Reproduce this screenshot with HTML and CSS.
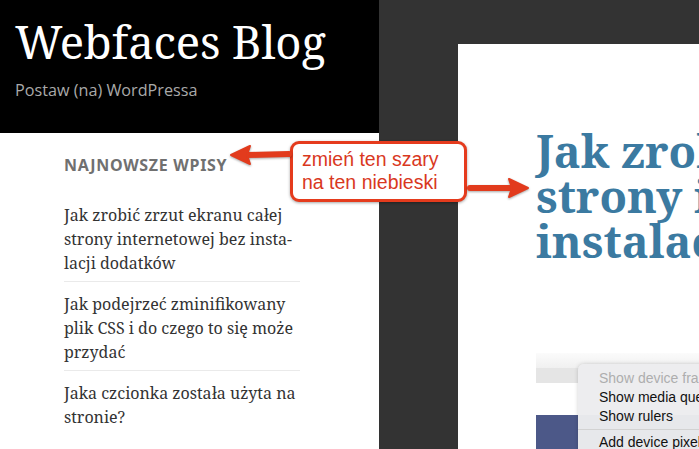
FILE: index.html
```html
<!DOCTYPE html>
<html lang="pl">
<head>
<meta charset="utf-8">
<title>Webfaces Blog</title>
<link rel="stylesheet" href="styles.css">
</head>
<body>
<div class="page">
  <aside class="sidebar">
    <header class="site-header">
      <h1 class="site-title">Webfaces Blog</h1>
      <p class="site-desc">Postaw (na) WordPressa</p>
    </header>
    <section class="widget">
      <h2 class="widget-title">Najnowsze wpisy</h2>
      <ul class="recent">
        <li><a href="#">Jak zrobić zrzut ekranu całej<br>strony internetowej bez insta-<br>lacji dodatków</a></li>
        <li><a href="#">Jak podejrzeć zminifikowany<br>plik CSS i do czego to się może<br>przydać</a></li>
        <li><a href="#">Jaka czcionka została użyta na<br>stronie?</a></li>
      </ul>
    </section>
  </aside>
  <main class="content">
    <article class="card">
      <h1 class="entry-title">Jak zrobić zrzut ekranu całej<br>strony internetowej bez<br>instalacji dodatków</h1>
      <div class="shot">
        <div class="shot-top"></div>
        <div class="shot-bar"></div>
        <div class="shot-white"></div>
        <div class="shot-blue"></div>
        <div class="menu">
          <div class="menu-item disabled">Show device frame</div>
          <div class="menu-item">Show media queries</div>
          <div class="menu-item">Show rulers</div>
          <div class="menu-sep"></div>
          <div class="menu-item">Add device pixel ratio</div>
        </div>
      </div>
    </article>
  </main>

  <div class="note">zmień ten szary<br>na ten niebieski</div>
  <svg class="arrow arrow-left" width="70" height="24" viewBox="0 0 70 24">
    <line x1="20" y1="12" x2="63" y2="11" stroke="#e23b1d" stroke-width="6" stroke-linecap="round"/>
    <polygon points="5,12 24,3 21,12 24,21" fill="#e23b1d" stroke="#e23b1d" stroke-width="2" stroke-linejoin="round"/>
  </svg>
  <svg class="arrow arrow-right" width="72" height="24" viewBox="0 0 72 24">
    <line x1="8" y1="12" x2="52" y2="12" stroke="#e23b1d" stroke-width="6" stroke-linecap="round"/>
    <polygon points="66,12 47,3 50,12 47,21" fill="#e23b1d" stroke="#e23b1d" stroke-width="2" stroke-linejoin="round"/>
  </svg>
</div>
</body>
</html>
```

FILE: styles.css
```css
* { box-sizing: border-box; }
html, body { margin: 0; padding: 0; }
body { background: #333333; }

.page {
  position: relative;
  display: flex;
  width: 699px;
  height: 449px;
  overflow: hidden;
  background: #333333;
}

.sidebar {
  width: 379px;
  flex: 0 0 379px;
  display: flex;
  flex-direction: column;
  background: #ffffff;
}

.site-header {
  height: 133px;
  background: #000000;
  padding: 18px 0 0 15px;
}
.site-title {
  margin: 0;
  font-family: "Noto Serif", "DejaVu Serif", "Liberation Serif", serif;
  font-weight: 400;
  font-size: 45.5px;
  line-height: 46px;
  color: #ffffff;
  letter-spacing: -0.2px;
}
.site-desc {
  margin: 16px 0 0;
  font-family: "Open Sans", "Noto Sans", sans-serif;
  font-size: 16.2px;
  line-height: 20px;
  color: #a9a9a9;
}

.widget {
  padding: 22px 0 0 64px;
}
.widget-title {
  margin: 0 0 18px;
  font-family: "Noto Sans", "Open Sans", sans-serif;
  font-weight: 700;
  font-size: 16px;
  line-height: 20px;
  letter-spacing: 0.7px;
  text-transform: uppercase;
  color: #707070;
}
.recent {
  list-style: none;
  margin: 0;
  padding: 0;
  width: 236px;
}
.recent li {
  padding: 10px 0 6px;
  border-bottom: 1px solid #eaeaea;
}
.recent li:last-child { border-bottom: 0; }
.recent a {
  font-family: "Noto Serif", "DejaVu Serif", "Liberation Serif", serif;
  font-size: 16px;
  line-height: 24px;
  color: #333333;
  text-decoration: none;
  white-space: nowrap;
}

.content {
  flex: 1 1 auto;
  min-width: 0;
  padding: 44px 0 0 79px;
  background: #333333;
}
.card {
  width: 560px;
  height: 100%;
  background: #ffffff;
  padding: 84px 0 0 78px;
}
.entry-title {
  margin: 0;
  font-family: "Noto Serif", "DejaVu Serif", "Liberation Serif", serif;
  font-weight: 700;
  font-size: 45px;
  line-height: 45px;
  color: #3b7aa1;
  white-space: nowrap;
}

.shot {
  position: relative;
  margin-top: 90px;
  height: 100px;
  display: flex;
  flex-direction: column;
}
.shot-top { height: 15px; background: linear-gradient(#fbfbfb, #f0f0f0); }
.shot-bar { height: 15px; background: #e5e5e5; }
.shot-white { height: 32px; background: #ffffff; }
.shot-blue { flex: 1; background: #4c5888; }

.menu {
  position: absolute;
  left: 42px;
  top: 11px;
  right: 0;
  bottom: 0;
  padding: 5px 0 0 21px;
  background: rgba(236, 236, 238, 0.97);
  border-radius: 6px 0 0 0;
  box-shadow: 0 0 4px rgba(0, 0, 0, 0.18);
  font-family: "Liberation Sans", Arial, sans-serif;
  font-size: 14px;
  line-height: 19px;
  color: #111111;
  white-space: nowrap;
}
.menu-item.disabled { color: #aeaeae; }
.menu-sep {
  height: 1px;
  margin: 3px 0 3px -21px;
  background: #d2d2d2;
}

.note {
  position: absolute;
  left: 290px;
  top: 141px;
  width: 177px;
  height: 61px;
  padding: 4px 0 0 9px;
  background: #ffffff;
  border: 3.5px solid #e53b1d;
  border-radius: 9px;
  box-shadow: 0 1px 3px rgba(0, 0, 0, 0.35);
  font-family: "Liberation Sans", Arial, sans-serif;
  font-size: 19.5px;
  line-height: 23px;
  color: #d9381e;
  white-space: nowrap;
}

.arrow {
  position: absolute;
  filter: drop-shadow(0 1px 1px rgba(0, 0, 0, 0.35));
}
.arrow-left { left: 226px; top: 143px; }
.arrow-right { left: 462px; top: 176px; }
```
